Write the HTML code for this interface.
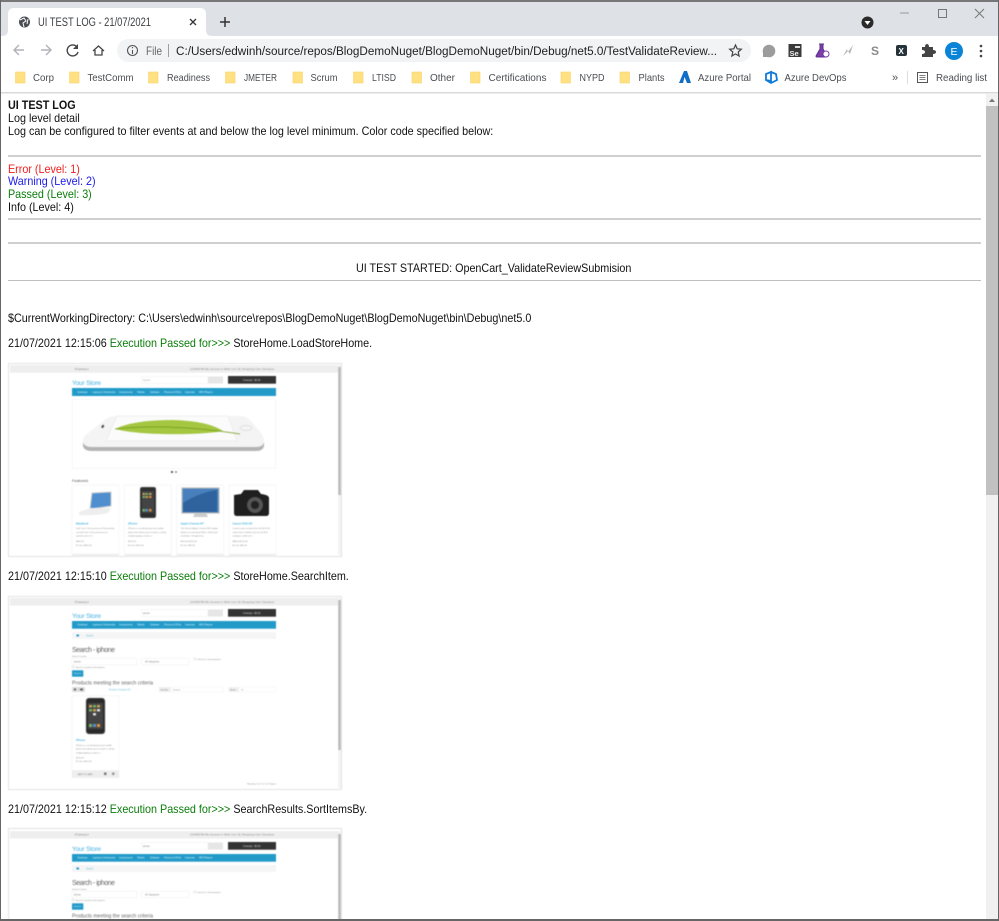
<!DOCTYPE html>
<html><head><meta charset="utf-8"><title>UI TEST LOG - 21/07/2021</title>
<style>
html,body{margin:0;padding:0;width:999px;height:921px;overflow:hidden;background:#fff;font-family:"Liberation Sans",sans-serif}
#w{position:relative;width:999px;height:921px;overflow:hidden;background:#fff}
.t{position:absolute;white-space:pre;font-size:12px;line-height:13px;color:#111;left:8px;transform:scaleX(.897);transform-origin:0 0;filter:blur(.2px)}
.hr{position:absolute;left:8px;width:973px;height:2px;background:#d0d0d0}
.shot{position:absolute;left:8px;width:334px;height:194px;filter:blur(.5px)}
.ch{position:absolute;left:0;top:0;filter:blur(.35px)}
text{font-family:"Liberation Sans",sans-serif}
.g{color:#0a7d0a}
</style></head><body><div id="w">

<svg class="ch" width="999" height="95" viewBox="0 0 999 95">
<rect width="999" height="95" fill="#fff"/>
<rect width="999" height="36" fill="#dee1e6"/>
<rect width="999" height="2" fill="#777"/>
<path d="M2 36 C6 36 8 34 8 30 V14 Q8 8 14 8 H200 Q206 8 206 14 V30 C206 34 208 36 212 36Z" fill="#fff"/>
<circle cx="24.5" cy="22" r="5.5" fill="#4a4d52"/>
<path d="M20 20 L24 18 L26 21 L23 23 L24 27 M28 19 L27 24" stroke="#fff" stroke-width="1" fill="none"/>
<text x="38" y="26" font-size="11.5" fill="#3c4043" textLength="113" lengthAdjust="spacingAndGlyphs">UI TEST LOG - 21/07/2021</text>
<path d="M190 19 L196 25 M196 19 L190 25" stroke="#333" stroke-width="1.3"/>
<path d="M225 17 V27 M220 22 H230" stroke="#333" stroke-width="1.5"/>
<path d="M900 13 H909" stroke="#999" stroke-width="1"/>
<rect x="938.5" y="9.5" width="8" height="8" fill="none" stroke="#777"/>
<path d="M975 9 L984 18 M984 9 L975 18" stroke="#777"/>
<circle cx="867.5" cy="22.5" r="6" fill="#2a2a2a"/>
<path d="M864.5 21 H870.5 L867.5 25Z" fill="#fff"/>

<path d="M24 50 H14 M19 45 L14 50 L19 55" stroke="#b0b3b8" stroke-width="1.4" fill="none"/>
<path d="M41 50 H51 M46 45 L51 50 L46 55" stroke="#b0b3b8" stroke-width="1.4" fill="none"/>
<path d="M77 47 A5.5 5.5 0 1 0 78 52" stroke="#444" stroke-width="1.4" fill="none"/><path d="M78 44 V49 H73Z" fill="#444"/>
<path d="M93 51 L98.5 46 L104 51 M95 50 V55 H102 V50" stroke="#444" stroke-width="1.3" fill="none"/>
<rect x="117" y="39" width="634" height="23" rx="11.5" fill="#f1f3f4"/>
<circle cx="132.5" cy="50.5" r="5" fill="none" stroke="#555" stroke-width="1.1"/><path d="M132.5 50 V54 M132.5 47 V48.2" stroke="#555" stroke-width="1.1"/>
<text x="146" y="55" font-size="12" fill="#666" textLength="16" lengthAdjust="spacingAndGlyphs">File</text>
<rect x="168" y="44" width="1" height="13" fill="#9aa0a6"/>
<text x="176" y="55" font-size="12.4" fill="#202124" textLength="541" lengthAdjust="spacingAndGlyphs">C:/Users/edwinh/source/repos/BlogDemoNuget/BlogDemoNuget/bin/Debug/net5.0/TestValidateReview...</text>
<path d="M735.5 45 L737.2 48.8 L741.3 49.2 L738.2 52 L739.1 56 L735.5 53.9 L731.9 56 L732.8 52 L729.7 49.2 L733.8 48.8Z" fill="none" stroke="#444" stroke-width="1.2"/>

<circle cx="769" cy="51" r="6.3" fill="#9c9c9c"/><path d="M763 51 V57 H769Z" fill="#9c9c9c"/>
<rect x="788.5" y="44" width="13" height="13" fill="#3a3a3a"/><rect x="795" y="46" width="5" height="2" fill="#ddd"/><text x="789.5" y="56" font-size="7.5" font-weight="bold" fill="#eee">Se</text>
<path d="M819 44 H824 M820 44 V49 L816 56 Q816 57 817 57 H826 Q827 57 827 56 L823 49 V44" fill="#7b3fa8" stroke="#5e2d91"/><circle cx="826" cy="54" r="3" fill="#fff" stroke="#7b3fa8"/>
<path d="M843 56 L847 49 L848 52 L853 45 L850 54 L848 51Z" fill="#b5b5b5"/>
<text x="871" y="55" font-size="12" font-weight="bold" fill="#8a8a8a">S</text>
<rect x="896" y="45" width="11" height="11" rx="2" fill="#26333a"/><text x="898.5" y="54" font-size="8" font-weight="bold" fill="#fff">X</text>
<path d="M922 47 H925 Q925 44 927 44 Q929 44 929 47 H933 V50 Q936 50 936 52 Q936 54 933 54 V57 H922 V54 Q925 54 925 52 Q925 50 922 50Z" fill="#444"/>
<circle cx="954" cy="51" r="9" fill="#0a84d6"/><text x="950.5" y="55" font-size="10.5" fill="#fff">E</text>
<circle cx="981" cy="46" r="1.3" fill="#444"/><circle cx="981" cy="51" r="1.3" fill="#444"/><circle cx="981" cy="56" r="1.3" fill="#444"/>

<g fill="#ffe082" stroke="#f7d56a" stroke-width=".6">
<rect x="15.500" y="72" width="9.5" height="11"/><rect x="69.5" y="72" width="9.5" height="11"/><rect x="148.5" y="72" width="9.5" height="11"/><rect x="225.5" y="72" width="9.5" height="11"/><rect x="293" y="72" width="9.5" height="11"/><rect x="353.5" y="72" width="9.5" height="11"/><rect x="412" y="72" width="9.5" height="11"/><rect x="470.5" y="72" width="9.5" height="11"/><rect x="561" y="72" width="9.5" height="11"/><rect x="620" y="72" width="9.5" height="11"/>
</g>
<g font-size="10.5" fill="#4a4d52" lengthAdjust="spacingAndGlyphs">
<text x="33" y="81" textLength="21" lengthAdjust="spacingAndGlyphs">Corp</text>
<text x="87.5" y="81" textLength="46" lengthAdjust="spacingAndGlyphs">TestComm</text>
<text x="167" y="81" textLength="43" lengthAdjust="spacingAndGlyphs">Readiness</text>
<text x="244" y="81" textLength="33" lengthAdjust="spacingAndGlyphs">JMETER</text>
<text x="310.5" y="81" textLength="27" lengthAdjust="spacingAndGlyphs">Scrum</text>
<text x="372" y="81" textLength="24" lengthAdjust="spacingAndGlyphs">LTISD</text>
<text x="430" y="81" textLength="25" lengthAdjust="spacingAndGlyphs">Other</text>
<text x="488.5" y="81" textLength="58" lengthAdjust="spacingAndGlyphs">Certifications</text>
<text x="579.5" y="81" textLength="25" lengthAdjust="spacingAndGlyphs">NYPD</text>
<text x="638.500" y="81" textLength="26" lengthAdjust="spacingAndGlyphs">Plants</text>
<text x="698" y="81" textLength="53" lengthAdjust="spacingAndGlyphs">Azure Portal</text>
<text x="784.5" y="81" textLength="62" lengthAdjust="spacingAndGlyphs">Azure DevOps</text>
<text x="936" y="81" textLength="51" lengthAdjust="spacingAndGlyphs">Reading list</text>
</g>
<path d="M679 83 L684 71 H687 L691 83 H687 L684.5 77 L683 83Z" fill="#0f6fc6"/>
<path d="M771 72 V81 L766 80 V74Z M771 72 L776 74 L777 80 L771 83 L766 80" fill="none" stroke="#0f7bd8" stroke-width="1.8"/>
<text x="892" y="81" font-size="11" fill="#555">»</text>
<rect x="907" y="71" width="1" height="13" fill="#dadce0"/>
<rect x="917.5" y="72.5" width="10" height="10" fill="none" stroke="#555"/><path d="M919.5 75.5 H925.5 M919.5 77.5 H925.5 M919.5 79.5 H925.5" stroke="#555" stroke-width=".8"/>
<rect y="92" width="999" height="1.5" fill="#d8d8d8"/>
</svg>

<div class="t" style="top:99px;font-weight:bold">UI TEST LOG</div>
<div class="t" style="top:112px">Log level detail</div>
<div class="t" style="top:125px">Log can be configured to filter events at and below the log level minimum. Color code specified below:</div>
<div class="hr" style="top:155px"></div>
<div class="t" style="top:163px;color:#f02020">Error (Level: 1)</div>
<div class="t" style="top:175px;color:#1a1ae8">Warning (Level: 2)</div>
<div class="t" style="top:188px;color:#0a7d0a">Passed (Level: 3)</div>
<div class="t" style="top:201px">Info (Level: 4)</div>
<div class="hr" style="top:218px"></div>
<div class="hr" style="top:242px"></div>
<div class="t" style="top:262px;left:356px">UI TEST STARTED: OpenCart_ValidateReviewSubmision</div>
<div class="hr" style="top:280px;height:1px;background:#c0c0c0"></div>
<div class="t" style="top:312px">$CurrentWorkingDirectory: C:\Users\edwinh\source\repos\BlogDemoNuget\BlogDemoNuget\bin\Debug\net5.0</div>
<div class="t" style="top:337px">21/07/2021 12:15:06 <span class="g">Execution Passed for&gt;&gt;&gt;</span> StoreHome.LoadStoreHome.</div>
<div class="t" style="top:570px">21/07/2021 12:15:10 <span class="g">Execution Passed for&gt;&gt;&gt;</span> StoreHome.SearchItem.</div>
<div class="t" style="top:803px">21/07/2021 12:15:12 <span class="g">Execution Passed for&gt;&gt;&gt;</span> SearchResults.SortItemsBy.</div>

<svg class="shot" style="top:363px" viewBox="0 0 334 194">
<rect x=".5" y=".5" width="333" height="193" fill="#fff" stroke="#e2e2e2"/>
<rect x="2" y="2" width="328" height="7.7" fill="#eee"/>
<rect x="330" y="2" width="3" height="190" fill="#f4f4f4"/><rect x="330.3" y="4" width="2.4" height="128" fill="#b8b8b8"/>
<g font-size="2.4" fill="#777"><text x="67" y="6.8">€ Currency ▾</text><text x="182" y="6.8" textLength="84">123456789  My Account ▾  Wish List (0)  Shopping Cart  Checkout</text></g>
<text x="64" y="22" font-size="6.5" fill="#45b1e0" textLength="29">Your Store</text>
<rect x="133.5" y="13.5" width="66.5" height="7" fill="#fff" stroke="#eee" stroke-width=".5"/><rect x="200" y="13.5" width="15" height="7" fill="#e6e6e6"/>
<text x="135" y="17.8" font-size="2.3" fill="#aaa">Search</text>
<rect x="220" y="13" width="48" height="7.7" fill="#333"/><text x="235" y="17.8" font-size="2.4" fill="#ddd">0 item(s) - $0.00</text>
<rect x="64" y="25" width="204" height="8" fill="#229ac8"/>
<g font-size="2.4" fill="#d8f0fa"><text x="69.5" y="29.8">Desktops</text><text x="84.5" y="29.8">Laptops &amp; Notebooks</text><text x="111" y="29.8">Components</text><text x="129" y="29.8">Tablets</text><text x="142" y="29.8">Software</text><text x="156" y="29.8">Phones &amp; PDAs</text><text x="177" y="29.8">Cameras</text><text x="191" y="29.8">MP3 Players</text></g>
<rect x="64.3" y="36.3" width="203.5" height="69" fill="#fff" stroke="#eee" stroke-width=".6"/>
<path d="M75 78 Q75 74 79 71 L98 56 Q102 53 108 53 H232 Q238 53 242 57 L253 70 Q256 74 256 78 V82 Q256 87 250 87 H82 Q75 87 75 82Z" fill="#f4f4f4"/>
<path d="M75 79 Q76 84 84 84 H248 Q255 84 256 79 V83 Q255 88 248 88 H84 Q76 88 75 83Z" fill="#b4b4b4"/>
<path d="M109 53 L98 78 H229 L220 53Z" fill="#fbfbfb" stroke="#ddd" stroke-width=".4"/>
<path d="M107 66 Q125 57 165 57 Q200 58 215 68 Q205 70 180 71 Q130 72 107 66Z" fill="#a4c640"/>
<path d="M107 66 Q160 60 232 71" stroke="#6f9a1e" stroke-width=".7" fill="none"/>
<ellipse cx="238" cy="65" rx="6" ry="2.5" fill="none" stroke="#ccc" stroke-width=".5"/>
<rect x="94" y="62" width="2" height="3" fill="#444" transform="rotate(30 95 63)"/>
<circle cx="164" cy="109" r="1" fill="#333"/><circle cx="168" cy="109" r="1" fill="#888"/>
<text x="64" y="119" font-size="4" fill="#555" textLength="16">Featured</text>
<g fill="#fff" stroke="#f0f0f0" stroke-width=".5"><rect x="64" y="122" width="47" height="69"/><rect x="116.3" y="122" width="47" height="69"/><rect x="168.7" y="122" width="47" height="69"/><rect x="221" y="122" width="47" height="69"/></g>
<g fill="#eee"><rect x="64" y="191" width="47" height="2.5"/><rect x="116.3" y="191" width="47" height="2.5"/><rect x="168.7" y="191" width="47" height="2.5"/><rect x="221" y="191" width="47" height="2.5"/></g>
<path d="M84 130 L103 129 V143 L82 146Z" fill="#4f8fd0" stroke="#ccc"/><path d="M71 149 L83 145 H103 L100 150 Q85 153 71 152Z" fill="#eee"/>
<rect x="132" y="124" width="16" height="31" rx="2" fill="#2e2e2e" stroke="#aaa" stroke-width=".5"/><rect x="134" y="128" width="12" height="22" fill="#444"/>
<g fill="#c9a14e"><rect x="134.5" y="130" width="2.5" height="2"/><rect x="141" y="130" width="2.5" height="2"/><rect x="137.5" y="133" width="2.5" height="2"/></g>
<g fill="#6fb36f"><rect x="137.5" y="130" width="2.5" height="2"/><rect x="134.5" y="133" width="2.5" height="2"/><rect x="134.5" y="146" width="2.5" height="2.500"/></g>
<g fill="#e0903a"><rect x="141" y="133" width="2.5" height="2"/><rect x="141" y="146" width="2.5" height="2.5"/></g>
<rect x="137.5" y="146" width="2.5" height="2.5" fill="#5a8fc9"/>
<rect x="174" y="125" width="37" height="25" fill="#4780bd" stroke="#bbb" stroke-width="1.2"/><path d="M175 140 Q190 130 209 127 V149 H175Z" fill="#2e639e"/><path d="M187 150 H198 L200 154 H185Z" fill="#ccc"/>
<path d="M226 132 L233 131 L236 127 H250 L253 131 Q261 132 261 135 V150 Q261 153 258 153 H229 Q226 153 226 150Z" fill="#1f1f1f"/><circle cx="247" cy="142" r="8" fill="#555"/><circle cx="247" cy="142" r="4" fill="#222"/>
<g font-size="2.8" fill="#45b1e0" font-weight="bold"><text x="68" y="161.5">MacBook</text><text x="120" y="161.5">iPhone</text><text x="172.5" y="161.5">Apple Cinema 30"</text><text x="224.5" y="161.5">Canon EOS 5D</text></g>
<g font-size="2.2" fill="#888">
<text x="68" y="166">Intel Core 2 Duo processor Powered by</text><text x="68" y="170">an Intel Core 2 Duo processor at</text><text x="68" y="173.5">speeds up to 2.1..</text><text x="68" y="179">$602.00</text><text x="68" y="183">Ex Tax: $500.00</text>
<text x="120" y="166">iPhone is a revolutionary new mobile</text><text x="120" y="170">phone that allows you to make a call by</text><text x="120" y="173.5">simply tapping a name o..</text><text x="120" y="179">$123.20</text><text x="120" y="183">Ex Tax: $101.00</text>
<text x="172.5" y="166">The 30-inch Apple Cinema HD Display</text><text x="172.5" y="170">delivers an amazing 2560 x 1600 pixel</text><text x="172.5" y="173.5">resolution. Designed sp..</text><text x="172.5" y="179">$110.00   $122.00</text><text x="172.5" y="183">Ex Tax: $90.00</text>
<text x="224.5" y="166">Canon's press material for the EOS 5D</text><text x="224.5" y="170">states that it 'defines (a) new D-SLR</text><text x="224.5" y="173.5">category', while we'r..</text><text x="224.5" y="179">$98.00   $122.00</text><text x="224.5" y="183">Ex Tax: $80.00</text>
</g>
</svg>

<svg class="shot" style="top:596px" viewBox="0 0 334 194">
<rect x=".5" y=".5" width="333" height="193" fill="#fff" stroke="#e2e2e2"/>
<rect x="2" y="2" width="328" height="7.5" fill="#eee"/>
<rect x="330" y="2" width="3" height="190" fill="#f4f4f4"/><rect x="330.3" y="4" width="2.4" height="150" fill="#b8b8b8"/>
<g font-size="2.4" fill="#777"><text x="67" y="6.8">€ Currency ▾</text><text x="182" y="6.8" textLength="84">123456789  My Account ▾  Wish List (0)  Shopping Cart  Checkout</text></g>
<text x="64" y="22" font-size="6.5" fill="#45b1e0" textLength="29">Your Store</text>
<rect x="133.5" y="13.5" width="66.5" height="7" fill="#fff" stroke="#eee" stroke-width=".5"/><rect x="200" y="13.5" width="15" height="7" fill="#e6e6e6"/>
<text x="135" y="17.8" font-size="2.3" fill="#888">iphone</text>
<rect x="220" y="13" width="48" height="7.7" fill="#333"/><text x="235" y="17.8" font-size="2.4" fill="#ddd">0 item(s) - $0.00</text>
<rect x="64" y="25" width="204" height="7.7" fill="#229ac8"/>
<g font-size="2.4" fill="#d8f0fa"><text x="69.5" y="29.6">Desktops</text><text x="84.5" y="29.6">Laptops &amp; Notebooks</text><text x="111" y="29.6">Components</text><text x="129" y="29.6">Tablets</text><text x="142" y="29.6">Software</text><text x="156" y="29.6">Phones &amp; PDAs</text><text x="177" y="29.6">Cameras</text><text x="191" y="29.6">MP3 Players</text></g>
<rect x="64" y="36" width="204" height="7" fill="#f5f5f5"/><rect x="68.5" y="38.5" width="2.5" height="2" fill="#229ac8"/><text x="78" y="40.3" font-size="2.3" fill="#6cbfe0">Search</text>
<text x="64" y="56" font-size="7" fill="#666" textLength="43">Search - iphone</text>
<text x="64" y="61" font-size="2.2" fill="#888">Search Criteria</text>
<rect x="64" y="62.3" width="65" height="6.4" fill="#fff" stroke="#eee" stroke-width=".5"/><text x="66" y="66.3" font-size="2.3" fill="#888">iphone</text>
<rect x="133.3" y="62.3" width="47.5" height="6.4" fill="#fff" stroke="#eee" stroke-width=".5"/><text x="137" y="66.3" font-size="2.3" fill="#888">All Categories</text>
<rect x="186" y="62" width="2" height="2" fill="#fff" stroke="#ccc" stroke-width=".4"/><text x="189.5" y="64" font-size="2.2" fill="#888">Search in subcategories</text>
<rect x="64" y="70" width="2" height="2" fill="#fff" stroke="#ccc" stroke-width=".4"/><text x="67.5" y="71.8" font-size="2.2" fill="#888">Search in product descriptions</text>
<rect x="64" y="74.3" width="11.3" height="6.4" fill="#229ac8"/><text x="66" y="78.2" font-size="2.2" fill="#dff">Search</text>
<text x="64" y="88.5" font-size="5" fill="#666" textLength="81">Products meeting the search criteria</text>
<rect x="64" y="91" width="13" height="5" fill="#ddd"/><rect x="66" y="92.5" width="2" height="2" fill="#666"/><rect x="72" y="92.5" width="3" height="2" fill="#666"/>
<text x="101" y="94.5" font-size="2.3" fill="#6cbfe0">Product Compare (0)</text>
<rect x="151" y="91" width="11.7" height="5" fill="#eee"/><text x="152.5" y="94.3" font-size="2.2" fill="#777">Sort By:</text>
<rect x="162.7" y="91" width="52.5" height="5" fill="#fff" stroke="#eee" stroke-width=".4"/><text x="165" y="94.3" font-size="2.2" fill="#888">Default</text>
<rect x="220.7" y="91" width="10" height="5" fill="#eee"/><text x="222" y="94.3" font-size="2.2" fill="#777">Show:</text>
<rect x="230.7" y="91" width="37.3" height="5" fill="#fff" stroke="#eee" stroke-width=".4"/><text x="233" y="94.3" font-size="2.2" fill="#888">15</text>
<rect x="64" y="99.7" width="47" height="82" fill="#fff" stroke="#f0f0f0" stroke-width=".5"/>
<rect x="78" y="102" width="19" height="36" rx="3" fill="#2a2a2a" stroke="#999" stroke-width=".6"/><rect x="80" y="107" width="15" height="26" fill="#444"/>
<g fill="#c9a14e"><rect x="81" y="109" width="3" height="2.5"/><rect x="89" y="109" width="3" height="2.5"/><rect x="85" y="113" width="3" height="2.5"/></g>
<g fill="#6fb36f"><rect x="85" y="109" width="3" height="2.5"/><rect x="81" y="113" width="3" height="2.5"/><rect x="81" y="128" width="3" height="3"/></g>
<g fill="#ddd"><rect x="89" y="113" width="3" height="2.5"/><rect x="85" y="117" width="3" height="2.5"/></g>
<rect x="85" y="128" width="3" height="3" fill="#5a8fc9"/><rect x="89" y="128" width="3" height="3" fill="#e0903a"/>
<text x="68" y="145" font-size="2.8" fill="#45b1e0" font-weight="bold">iPhone</text>
<g font-size="2.2" fill="#888"><text x="68" y="150">iPhone is a revolutionary new mobile</text><text x="68" y="153.7">phone that allows you to make a call by</text><text x="68" y="157.3">simply tapping a name o..</text><text x="68" y="162.3">$123.20</text><text x="68" y="166">Ex Tax: $101.00</text></g>
<rect x="64" y="174.3" width="47" height="7.4" fill="#eee"/><text x="70" y="178.8" font-size="2.2" fill="#666">ADD TO CART</text><rect x="96" y="176.5" width="2.5" height="2.5" fill="#777"/><rect x="104" y="176.5" width="2.5" height="2.5" fill="#999"/>
<text x="239" y="188.3" font-size="2.2" fill="#888">Showing 1 to 1 of 1 (1 Pages)</text>
</svg>

<svg class="shot" style="top:828px;height:93px" viewBox="0 0 334 93">
<rect x=".5" y=".5" width="333" height="110" fill="#fff" stroke="#e2e2e2"/>
<rect x="2" y="3" width="328" height="7.5" fill="#eee"/>
<rect x="330" y="3" width="3" height="90" fill="#f4f4f4"/><rect x="330.3" y="6" width="2.4" height="90" fill="#b8b8b8"/>
<g font-size="2.4" fill="#777"><text x="67" y="7.5">€ Currency ▾</text><text x="182" y="7.5" textLength="84">123456789  My Account ▾  Wish List (0)  Shopping Cart  Checkout</text></g>
<text x="64" y="23" font-size="6.5" fill="#45b1e0" textLength="29">Your Store</text>
<rect x="133.5" y="14.5" width="66.5" height="7" fill="#fff" stroke="#eee" stroke-width=".5"/><rect x="200" y="14.5" width="15" height="7" fill="#e6e6e6"/>
<text x="135" y="18.8" font-size="2.3" fill="#888">iphone</text>
<rect x="220" y="14" width="48" height="7.7" fill="#333"/><text x="235" y="18.8" font-size="2.4" fill="#ddd">0 item(s) - $0.00</text>
<rect x="64" y="26" width="204" height="7.7" fill="#229ac8"/>
<g font-size="2.4" fill="#d8f0fa"><text x="69.5" y="30.6">Desktops</text><text x="84.5" y="30.6">Laptops &amp; Notebooks</text><text x="111" y="30.6">Components</text><text x="129" y="30.6">Tablets</text><text x="142" y="30.6">Software</text><text x="156" y="30.6">Phones &amp; PDAs</text><text x="177" y="30.6">Cameras</text><text x="191" y="30.6">MP3 Players</text></g>
<rect x="64" y="37" width="204" height="7" fill="#f5f5f5"/><rect x="68.5" y="39.5" width="2.5" height="2" fill="#229ac8"/><text x="78" y="41.3" font-size="2.3" fill="#6cbfe0">Search</text>
<text x="64" y="57" font-size="7" fill="#666" textLength="43">Search - iphone</text>
<text x="64" y="62" font-size="2.2" fill="#888">Search Criteria</text>
<rect x="64" y="63.3" width="65" height="6.4" fill="#fff" stroke="#eee" stroke-width=".5"/><text x="66" y="67.3" font-size="2.3" fill="#888">iphone</text>
<rect x="133.3" y="63.3" width="47.5" height="6.4" fill="#fff" stroke="#eee" stroke-width=".5"/><text x="137" y="67.3" font-size="2.3" fill="#888">All Categories</text>
<rect x="186" y="63" width="2" height="2" fill="#fff" stroke="#ccc" stroke-width=".4"/><text x="189.5" y="65" font-size="2.2" fill="#888">Search in subcategories</text>
<rect x="64" y="71" width="2" height="2" fill="#fff" stroke="#ccc" stroke-width=".4"/><text x="67.5" y="72.8" font-size="2.2" fill="#888">Search in product descriptions</text>
<rect x="64" y="75.3" width="11.3" height="6.4" fill="#229ac8"/><text x="66" y="79.2" font-size="2.2" fill="#dff">Search</text>
<text x="64" y="89.5" font-size="5" fill="#666" textLength="81">Products meeting the search criteria</text>
</svg>

<div style="position:absolute;left:986px;top:94px;width:12px;height:827px;background:#f1f1f1"></div>
<div style="position:absolute;left:986px;top:106px;width:12px;height:389px;background:#c1c1c1"></div>
<svg style="position:absolute;left:986px;top:94px" width="12" height="12"><path d="M3 8 L6 4.5 L9 8Z" fill="#777"/></svg>
<div style="position:absolute;left:0;top:0;width:1px;height:921px;background:#666"></div>
<div style="position:absolute;left:998px;top:0;width:1px;height:921px;background:#666"></div>
<div style="position:absolute;left:0;top:919px;width:999px;height:2px;background:#666"></div>
</div></body></html>
